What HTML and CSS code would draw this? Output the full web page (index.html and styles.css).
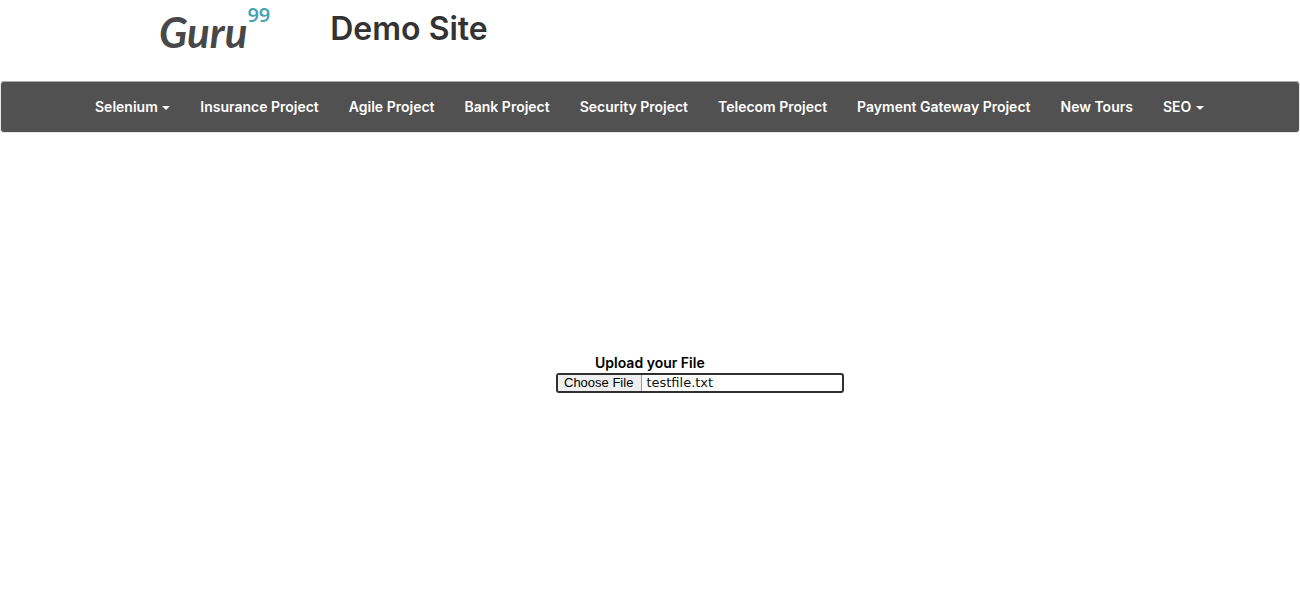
FILE: index.html
```html
<!DOCTYPE html>
<html lang="en">
<head>
<meta charset="utf-8">
<title>Demo Site</title>
<link rel="stylesheet" href="styles.css">
</head>
<body>
<header class="header">
  <a class="logo" href="#">Guru<sup class="logo-sup">99</sup></a>
  <h1 class="title">Demo Site</h1>
</header>
<nav class="navbar">
  <ul class="menu">
    <li><a href="#">Selenium <span class="caret"></span></a></li>
    <li><a href="#">Insurance Project</a></li>
    <li><a href="#">Agile Project</a></li>
    <li><a href="#">Bank Project</a></li>
    <li><a href="#">Security Project</a></li>
    <li><a href="#">Telecom Project</a></li>
    <li><a href="#">Payment Gateway Project</a></li>
    <li><a href="#">New Tours</a></li>
    <li><a href="#">SEO <span class="caret"></span></a></li>
  </ul>
</nav>
<main class="main">
  <form class="upload">
    <label class="upload-label" for="choose">Upload your File</label>
    <div class="file-field">
      <button class="file-button" id="choose" type="button">Choose File</button>
      <output class="file-name" for="file" id="name">testfile.txt</output>
      <input type="file" id="file" hidden>
    </div>
  </form>
</main>
<script src="script.js"></script>
</body>
</html>
```
FILE: styles.css
```css
* { box-sizing: border-box; }
body {
  margin: 0;
  background: #fff;
  color: #333;
  font: 14px/20px Inter, sans-serif;
}
.header {
  display: flex;
  align-items: flex-start;
  gap: 60px;
  height: 81px;
  padding-left: 159px;
}
.logo {
  display: flex;
  align-items: flex-start;
  color: #484848;
  font: italic 700 42px/64px Lato, sans-serif;
  text-decoration: none;
}
.logo-sup {
  color: #40a0b4;
  font: 600 20px/30px "Open Sans", sans-serif;
}
.title {
  margin: 0;
  font-size: 32px;
  font-weight: 600;
  line-height: 58px;
}
.navbar {
  background: #515151;
  border: 1px solid #e7e7e7;
  border-top-color: #aaa;
  border-radius: 4px;
}
.menu {
  display: flex;
  margin: 0;
  padding: 0 79px;
  list-style: none;
}
.menu a {
  display: block;
  padding: 15px;
  color: #fff;
  font-weight: 600;
  text-decoration: none;
  white-space: nowrap;
}
.caret {
  display: inline-block;
  margin-left: 1px;
  vertical-align: middle;
  border-top: 4px solid #fff;
  border-right: 4px solid transparent;
  border-left: 4px solid transparent;
}
.main {
  display: flex;
  justify-content: center;
  padding-top: 220px;
}
.upload {
  display: flex;
  flex-direction: column;
  width: 288px;
  margin-left: 100px;
}
.upload-label {
  padding-left: 39px;
  color: #000;
  font-weight: 600;
}
.file-field {
  display: flex;
  align-items: stretch;
  height: 20px;
  overflow: hidden;
  border: 2px solid #303030;
  border-radius: 3px;
}
.file-button {
  padding: 0 8px 0 6px;
  border: 0;
  border-right: 1px solid #999;
  background: #efefef;
  color: #000;
  font: 13px/16px "Liberation Sans", sans-serif;
}
.file-name {
  padding-left: 4px;
  color: #111;
  font: 13px/16px "DejaVu Sans", sans-serif;
}
```
FILE: script.js
```js
const file = document.getElementById('file');
document.getElementById('choose').addEventListener('click', () => file.click());
file.addEventListener('change', () => {
  document.getElementById('name').value = file.files[0] ? file.files[0].name : 'No file chosen';
});
```
